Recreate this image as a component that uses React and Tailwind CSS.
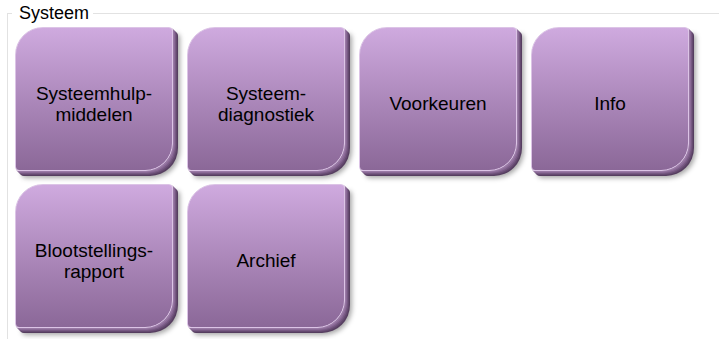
const BUTTONS = [
  ['Systeemhulp-', 'middelen'],
  ['Systeem-', 'diagnostiek'],
  ['Voorkeuren'],
  ['Info'],
  ['Blootstellings-', 'rapport'],
  ['Archief'],
]

function TileButton({ lines }) {
  return (
    <div className="h-[150px] w-[164px]">
      <button
        type="button"
        className="flex h-[144px] w-[158px] flex-col items-center justify-center rounded-tl-[28px] rounded-tr-[4px] rounded-br-[28px] rounded-bl-[4px] border border-[#dcc4e6] bg-gradient-to-b from-[#cfaadf] to-[#8b6898] pt-[9px] text-center text-[19px] leading-[21px] text-black shadow-[1px_1px_0_#9a7aa6,2px_2px_0_#8a6a96,3px_3px_0_#775983,4px_4px_0_#654a70,5px_5px_0_#563e60,7px_7px_5px_rgba(0,0,0,0.35)]"
      >
        {lines.map((line) => (
          <span key={line} className="block">
            {line}
          </span>
        ))}
      </button>
    </div>
  )
}

export default function App() {
  return (
    <div className="h-[339px] w-[719px] overflow-hidden bg-white pt-[3px] font-['Liberation_Sans',Arial,sans-serif]">
      <fieldset className="ml-[7px] h-[336px] border-t border-l border-[#e2e2e2] pl-[7px] pt-[4px]">
        <legend className="-ml-[3px] pl-[7px] pr-1 text-[18px] leading-[20px] text-black">
          Systeem
        </legend>
        <div className="grid grid-cols-[repeat(4,164px)] gap-x-[8px] gap-y-[7px]">
          {BUTTONS.map((lines) => (
            <TileButton key={lines[0]} lines={lines} />
          ))}
        </div>
      </fieldset>
    </div>
  )
}
